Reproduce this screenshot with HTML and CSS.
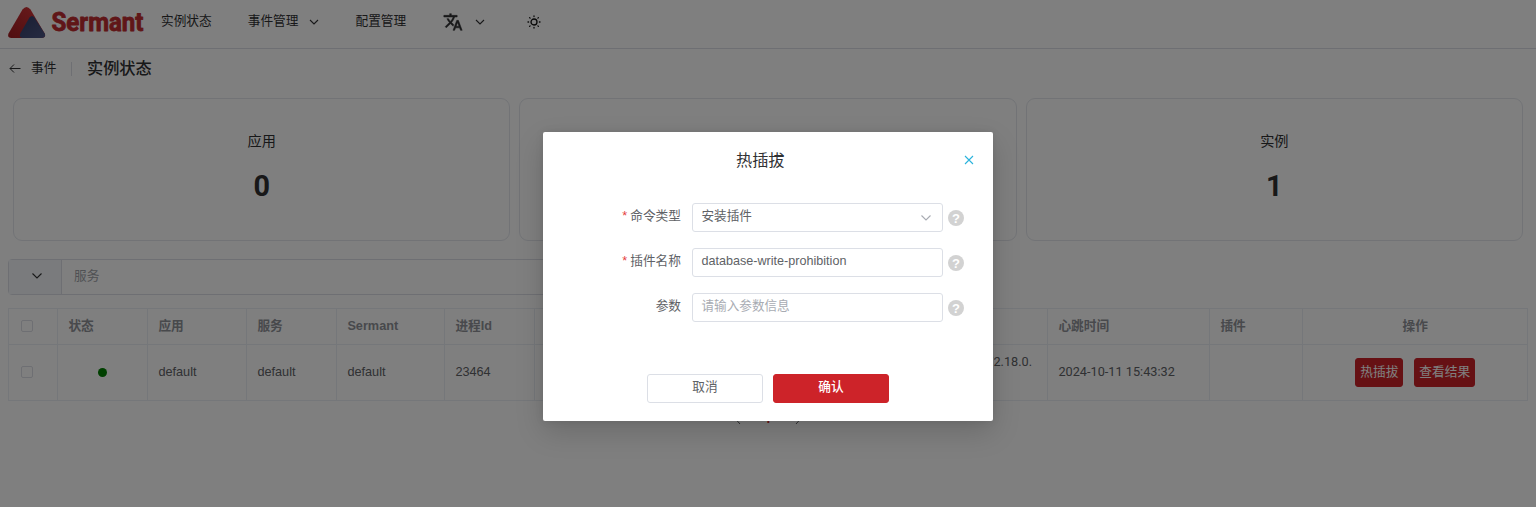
FILE: index.html
```
<!DOCTYPE html>
<html lang="zh">
<head>
<meta charset="utf-8">
<title>Sermant</title>
<link rel="stylesheet" href="styles.css">
</head>
<body>
<div class="page">
  <header class="header">
    <svg class="logo" width="153" height="48" viewBox="0 0 153 48">
      <defs>
        <linearGradient id="red" x1="1" y1="0" x2="0" y2="1"><stop offset="0" stop-color="#d9383c"/><stop offset="1" stop-color="#a01c20"/></linearGradient>
        <linearGradient id="blue" x1="0" y1="0" x2="1" y2="1"><stop offset="0" stop-color="#343c66"/><stop offset="1" stop-color="#4c5684"/></linearGradient>
      </defs>
      <path d="M22.500 9.500Q26.500 4.500 30.500 9.500L45 34Q46 38 41 38H11Q7 37.500 8.500 33.500Z" fill="url(#red)"/>
      <path d="M29.500 17.500Q32 14.500 34.500 17.500L45 34Q46 38 41 38H22Q18.500 37 20.500 33Z" fill="url(#blue)"/>
      <text x="51.500" y="31.200" class="logo-text" textLength="92" lengthAdjust="spacingAndGlyphs">Sermant</text>
    </svg>
    <nav class="nav">
      <a class="nav-item status">实例状态</a>
      <a class="nav-item events">事件管理 <svg class="chev" width="10" height="10" viewBox="0 0 10 10"><path d="M1 3l4 4 4-4"/></svg></a>
      <a class="nav-item config">配置管理</a>
      <a class="nav-item lang">
        <svg width="20" height="20" viewBox="0 0 24 24"><path d="M12.870 15.070l-2.540-2.510.03-.03A17.520 17.520 0 0 0 14.070 6H17V4h-7V2H8v2H1v2h11.170C11.500 7.920 10.440 9.750 9 11.350 8.070 10.320 7.300 9.190 6.690 8h-2c.73 1.630 1.730 3.170 2.980 4.560l-5.090 5.020L4 19l5-5 3.110 3.110zM18.500 10h-2L12 22h2l1.120-3h4.750L21 22h2zm-2.620 7l1.620-4.330L19.120 17z" fill="#303133" stroke="#303133" stroke-width=".6"/></svg>
        <svg class="chev" width="10" height="10" viewBox="0 0 10 10"><path d="M1 3l4 4 4-4"/></svg>
      </a>
      <a class="nav-item theme"><svg width="14" height="14" viewBox="0 0 14 14" fill="none" stroke="#111" stroke-width="1.300"><circle cx="7" cy="7" r="3"/><path stroke-linecap="round" d="M7 1v.6M7 12.400v.6M1 7h.6M12.400 7h.6M2.600 2.600l.5.5M10.900 10.900l.5.5M2.600 11.400l.5-.5M10.900 3.100l.5-.5"/></svg></a>
    </nav>
  </header>

  <div class="page-title">
    <svg width="12" height="10" viewBox="0 0 12 10" fill="none" stroke="#303133"><path d="M11.500 5.500H1M5 1.500L1 5.500l4 4"/></svg>
    <span class="back">事件</span>
    <span class="divider"></span>
    <h1>实例状态</h1>
  </div>

  <section class="stats">
    <div class="stat"><span>应用</span><strong>0</strong></div>
    <div class="stat"><span>服务</span><strong>0</strong></div>
    <div class="stat"><span>实例</span><strong>1</strong></div>
  </section>

  <div class="search">
    <div class="search-kind"><svg class="chev" width="10" height="10" viewBox="0 0 10 10"><path d="M.5 2.500l4.500 4.500 4.500-4.500"/></svg></div>
    <div class="search-input">服务</div>
  </div>

  <table class="table">
    <colgroup><col class="c1"><col class="c2"><col class="c3"><col class="c4"><col class="c5"><col class="c6"><col class="c7"><col class="c8"><col class="c9"><col class="c10"></colgroup>
    <tr class="head"><th><i class="box"></i></th><th>状态</th><th>应用</th><th>服务</th><th>Sermant</th><th>进程Id</th><th>IP</th><th>心跳时间</th><th>插件</th><th class="center">操作</th></tr>
    <tr><td><i class="box"></i></td><td class="center"><i class="dot"></i></td><td>default</td><td>default</td><td>default</td><td>23464</td><td class="ip"><span>172.18.0.<br>1</span></td><td class="time">2024-10-11 15:43:32</td><td></td>
      <td><div class="actions"><button>热插拔</button><button>查看结果</button></div></td></tr>
  </table>

  <div class="pager">
    <svg width="8" height="12" viewBox="0 0 8 12"><path d="M6 1L1.500 6 6 11"/></svg>
    <b>1</b>
    <svg width="8" height="12" viewBox="0 0 8 12"><path d="M2 1l4.500 5L2 11"/></svg>
  </div>
</div>

<div class="overlay">
  <div class="dialog">
    <div class="dialog-head">热插拔
      <svg class="close" width="10" height="10" viewBox="0 0 10 10"><path d="M1 1l8 8M9 1L1 9"/></svg>
    </div>
    <div class="form">
      <div class="row"><label><em>*</em>命令类型</label><div class="field">安装插件<svg width="12" height="10" viewBox="0 0 12 10"><path d="M1.500 2.500L6 7l4.500-4.500"/></svg></div><i class="help">?</i></div>
      <div class="row"><label><em>*</em>插件名称</label><div class="field">database-write-prohibition</div><i class="help">?</i></div>
      <div class="row"><label>参数</label><div class="field placeholder">请输入参数信息</div><i class="help">?</i></div>
    </div>
    <div class="footer"><button class="cancel">取消</button><button class="confirm">确认</button></div>
  </div>
</div>
</body>
</html>
```
FILE: styles.css
```
* { box-sizing: border-box; }
body { margin: 0; height: 507px; overflow: hidden; background: #fff; color: #303133; font: 12.7px/18px "Liberation Sans", "Noto Sans CJK SC", sans-serif; }
i, em { font-style: normal; }
.page { height: 507px; }
.header { display: flex; height: 49px; border-bottom: 1px solid #dcdfe6; }
.logo-text { font: bold 25px Roboto, sans-serif; fill: #c02c30; stroke: #c02c30; stroke-width: .8px; stroke-linejoin: round; }
.nav { display: flex; height: 43px; align-items: center; padding-left: 8px; }
.nav-item { display: flex; align-items: center; line-height: 17px; }
.chev { fill: none; stroke: #303133; stroke-width: 1.1; }
.events { margin-left: 36px; gap: 10px; }
.config { margin-left: 37px; }
.lang { margin-left: 37px; gap: 12px; }
.theme { margin-left: 42px; }
.page-title { display: flex; height: 38px; align-items: center; padding-left: 9px; }
.back { margin-left: 10px; }
.divider { width: 1px; height: 14px; background: #dcdfe6; margin: 2px 15px 0 14.6px; }
h1 { margin: 0; font-size: 16.2px; font-weight: 500; line-height: 22px; }
.stats { display: grid; grid-template-columns: repeat(3, 1fr); gap: 9px; margin: 11px 13px 0; }
.stat { height: 143px; border: 1px solid #e4e7ed; border-radius: 9px; display: flex; flex-direction: column; align-items: center; padding-top: 31px; }
.stat span { font-size: 14.2px; line-height: 22px; }
.stat strong { font-family: Roboto, sans-serif; font-size: 28.8px; line-height: 36px; margin-top: 16px; }
.search { display: flex; width: 760px; height: 36px; margin: 18px 0 0 8px; border: 1px solid #dcdfe6; border-radius: 4px; }
.search-kind { width: 53px; padding: 11px 0 0 23px; background: #f5f7fa; border-right: 1px solid #dcdfe6; }
.search-kind svg { display: block; }
.search-input { padding: 7px 12px; color: #a0a2a8; }
.table { width: 1520px; margin: 13px 0 0 8px; table-layout: fixed; border-collapse: collapse; }
.c1 { width: 49px; } .c2 { width: 90px; } .c3 { width: 99px; } .c4 { width: 90px; } .c5 { width: 108px; }
.c6 { width: 90px; } .c7 { width: 513px; } .c8 { width: 162px; } .c9 { width: 93px; } .c10 { width: 225px; }
.table th, .table td { height: 56px; border: 1px solid #ebeef5; padding: 0 10px 2px 10.4px; text-align: left; color: #606266; }
.table th { height: 36px; color: #909399; }
.table .center { text-align: center; }
.box { display: block; width: 12px; height: 12px; border: 1px solid #dcdfe6; border-radius: 2px; margin: 1px 0 0 2px; }
.dot { display: inline-block; width: 9px; height: 9px; border-radius: 50%; background: green; vertical-align: -1px; }
.table .ip { text-align: right; padding: 0 15px 2px 0; line-height: 20px; font-family: Roboto, sans-serif; }
.ip span { display: inline-block; text-align: left; }
.time { font-family: Roboto, sans-serif; letter-spacing: .02px; }
.actions { display: flex; justify-content: center; gap: 11px; padding-top: 2px; }
button { font: inherit; border: 1px solid #cd2329; border-radius: 3px; color: #fff; background: #cd2329; height: 29px; padding: 0 4px 2px; }
.pager { display: flex; justify-content: center; align-items: center; gap: 22px; padding-top: 9px; color: #cd2329; font-family: Roboto, sans-serif; }
.pager svg { fill: none; stroke: #606266; }
.overlay { position: absolute; inset: 0; background: rgba(0, 0, 0, .5); }
.dialog { width: 450px; height: 289px; margin: 132px auto 0; background: #fff; border-radius: 2px; box-shadow: 0 11px 29px rgba(0,0,0,.16), 0 0 8px rgba(0,0,0,.08); }
.dialog-head { height: 71px; padding: 17px 19px 0 193px; font-size: 16.2px; line-height: 22px; display: flex; justify-content: space-between; }
.close { margin-top: 6px; fill: none; stroke: #2bb3dc; stroke-width: 1.1; }
.form { display: flex; flex-direction: column; gap: 16px; color: #606266; }
.row { display: flex; height: 29px; }
.row label { width: 138px; text-align: right; padding-top: 4px; }
.row em { color: #e53d3d; margin-right: 3px; }
.field { width: 251px; margin-left: 11px; border: 1px solid #dcdfe6; border-radius: 3px; padding: 3px 10px 0 8.5px; display: flex; justify-content: space-between; font-size: 12.6px; }
.field svg { margin-top: 6px; fill: none; stroke: #a8abb2; stroke-width: 1.1; }
.placeholder { color: #a8abb2; }
.help { width: 16px; height: 16px; margin: 7px 0 0 5px; border-radius: 50%; background: #d2d2d2; color: #fff; font-size: 13px; line-height: 17px; font-weight: bold; text-align: center; }
.footer { display: flex; justify-content: center; gap: 10px; padding-top: 52px; }
.footer button { width: 116px; padding-bottom: 3px; }
.footer .cancel { background: #fff; border-color: #dcdfe6; color: #606266; }
.footer .confirm { font-weight: 500; }
```
